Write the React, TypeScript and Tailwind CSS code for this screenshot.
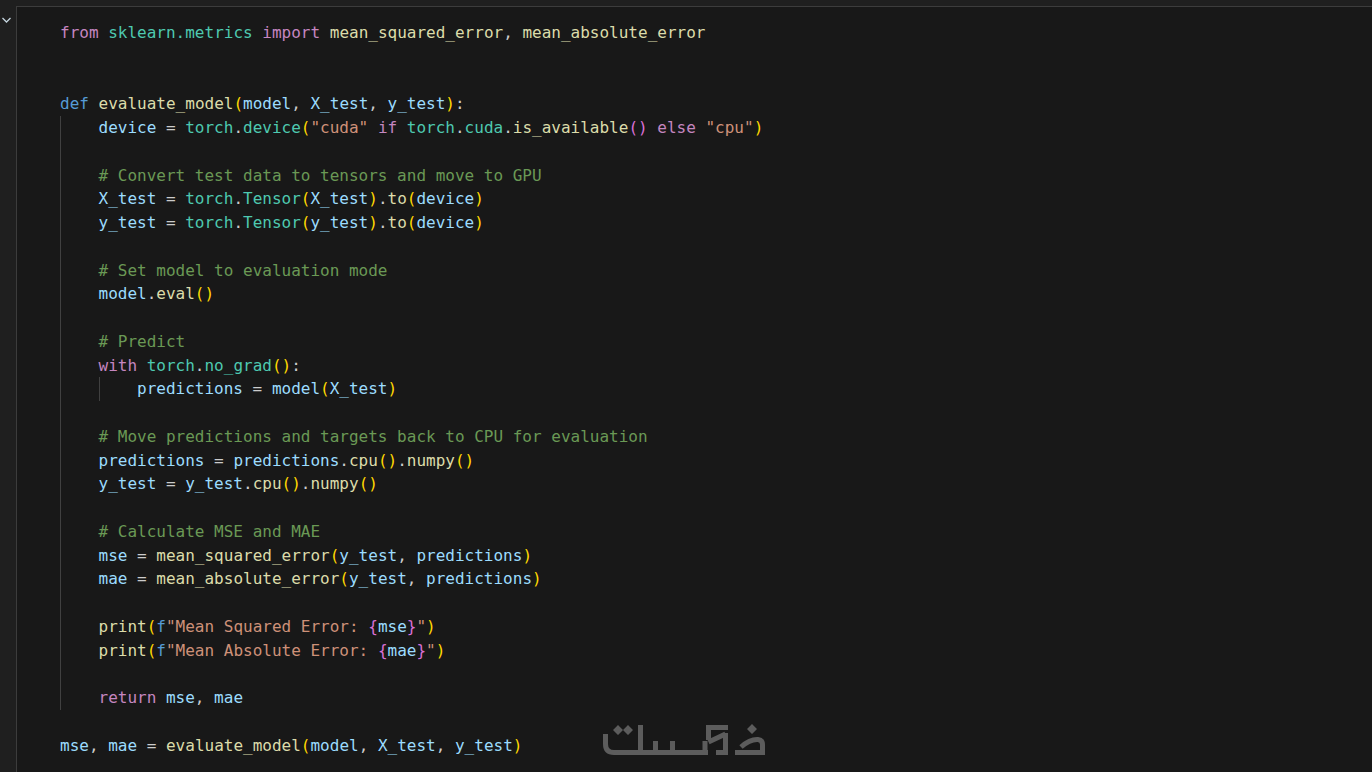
import React from 'react';

const kw = 'text-[#c586c0]';
const def = 'text-[#569cd6]';
const fn = 'text-[#dcdcaa]';
const vr = 'text-[#9cdcfe]';
const cls = 'text-[#4ec9b0]';
const str = 'text-[#ce9178]';
const com = 'text-[#6a9955]';
const gold = 'text-[#ffd700]';
const orchid = 'text-[#da70d6]';
const pl = 'text-[#cccccc]';

type Token = [string, string];

const Line = ({ tokens = [] }: { tokens?: Token[] }) => (
  <div className="h-[23.75px] leading-[23.75px] whitespace-pre">
    {tokens.map(([color, text], i) => (
      <span key={i} className={color}>{text}</span>
    ))}
  </div>
);

const assignTensor = (name: string): Token[] => [
  [vr, name], [pl, ' = '], [cls, 'torch'], [pl, '.'], [cls, 'Tensor'], [gold, '('], [vr, name], [gold, ')'],
  [pl, '.'], [fn, 'to'], [gold, '('], [vr, 'device'], [gold, ')'],
];

const printLine = (label: string, name: string): Token[] => [
  [fn, 'print'], [gold, '('], [def, 'f'], [str, `"${label}: `], [orchid, '{'], [vr, name], [orchid, '}'], [str, '"'], [gold, ')'],
];

const metricLine = (name: string, func: string): Token[] => [
  [vr, name], [pl, ' = '], [fn, func], [gold, '('], [vr, 'y_test'], [pl, ', '], [vr, 'predictions'], [gold, ')'],
];

function KhamsatLogo() {
  return (
    <svg viewBox="0 0 170 36" className="w-[170px] h-[36px]" fill="none" stroke="#5c5c5c" strokeWidth="5">
      <path d="M5.500 12v10q0 8.500 8.500 8.500H108" />
      <path d="M40.500 3v27M55.500 19v11M72.500 19v11M105 19v11" />
      <path d="M106 5.500h22M108.500 3v15M108.500 20l17-8" />
      <path d="M125.500 11v22M116 30.500h10" />
      <path d="M141 25q9-8 17-7.500q4.500.5 4.500 5v10M135 30.500h30" />
      <path d="M18 3l5 5-5 5-5-5zM28 3l5 5-5 5-5-5zM152 2l5 5-5 5-5-5z" fill="#5c5c5c" stroke="none" />
    </svg>
  );
}

export default function App() {
  return (
    <div className="relative h-[772px] w-[1372px] overflow-hidden bg-[#1f1f1f] font-['DejaVu_Sans_Mono',monospace] text-[16px]">
      <div className="mt-[6px] flex h-[766px]">
        <div className="w-4 shrink-0 pl-[2px] pt-[11px]">
          <svg viewBox="0 0 9 6" className="w-[9px] h-[6px]" fill="none" stroke="#c5d5df" strokeWidth="1.300">
            <path d="M.5 1l4 4 4-4" />
          </svg>
        </div>
        <div className="flex-1 border-l border-t border-[#3c3c3c] bg-[#181818] pl-[43px] pt-[14px]">
          <Line tokens={[[kw, 'from'], [pl, ' '], [cls, 'sklearn.metrics'], [pl, ' '], [kw, 'import'], [pl, ' '], [fn, 'mean_squared_error'], [pl, ', '], [fn, 'mean_absolute_error']]} />
          <Line />
          <Line />
          <Line tokens={[[def, 'def'], [pl, ' '], [fn, 'evaluate_model'], [gold, '('], [vr, 'model'], [pl, ', '], [vr, 'X_test'], [pl, ', '], [vr, 'y_test'], [gold, ')'], [pl, ':']]} />
          <div className="border-l border-[#404040] pl-[37.5px]">
            <Line tokens={[[vr, 'device'], [pl, ' = '], [cls, 'torch'], [pl, '.'], [cls, 'device'], [gold, '('], [str, '"cuda"'], [pl, ' '], [kw, 'if'], [pl, ' '], [cls, 'torch'], [pl, '.'], [cls, 'cuda'], [pl, '.'], [fn, 'is_available'], [orchid, '()'], [pl, ' '], [kw, 'else'], [pl, ' '], [str, '"cpu"'], [gold, ')']]} />
            <Line />
            <Line tokens={[[com, '# Convert test data to tensors and move to GPU']]} />
            <Line tokens={assignTensor('X_test')} />
            <Line tokens={assignTensor('y_test')} />
            <Line />
            <Line tokens={[[com, '# Set model to evaluation mode']]} />
            <Line tokens={[[vr, 'model'], [pl, '.'], [fn, 'eval'], [gold, '()']]} />
            <Line />
            <Line tokens={[[com, '# Predict']]} />
            <Line tokens={[[kw, 'with'], [pl, ' '], [cls, 'torch'], [pl, '.'], [cls, 'no_grad'], [gold, '()'], [pl, ':']]} />
            <div className="border-l border-[#404040] pl-[37.5px]">
              <Line tokens={[[vr, 'predictions'], [pl, ' = '], [vr, 'model'], [gold, '('], [vr, 'X_test'], [gold, ')']]} />
            </div>
            <Line />
            <Line tokens={[[com, '# Move predictions and targets back to CPU for evaluation']]} />
            <Line tokens={[[vr, 'predictions'], [pl, ' = '], [vr, 'predictions'], [pl, '.'], [fn, 'cpu'], [gold, '()'], [pl, '.'], [fn, 'numpy'], [gold, '()']]} />
            <Line tokens={[[vr, 'y_test'], [pl, ' = '], [vr, 'y_test'], [pl, '.'], [fn, 'cpu'], [gold, '()'], [pl, '.'], [fn, 'numpy'], [gold, '()']]} />
            <Line />
            <Line tokens={[[com, '# Calculate MSE and MAE']]} />
            <Line tokens={metricLine('mse', 'mean_squared_error')} />
            <Line tokens={metricLine('mae', 'mean_absolute_error')} />
            <Line />
            <Line tokens={printLine('Mean Squared Error', 'mse')} />
            <Line tokens={printLine('Mean Absolute Error', 'mae')} />
            <Line />
            <Line tokens={[[kw, 'return'], [pl, ' '], [vr, 'mse'], [pl, ', '], [vr, 'mae']]} />
          </div>
          <Line />
          <Line tokens={[[vr, 'mse'], [pl, ', '], [vr, 'mae'], [pl, ' = '], [fn, 'evaluate_model'], [gold, '('], [vr, 'model'], [pl, ', '], [vr, 'X_test'], [pl, ', '], [vr, 'y_test'], [gold, ')']]} />
        </div>
      </div>
      <div className="absolute left-[600px] top-[722px]">
        <KhamsatLogo />
      </div>
    </div>
  );
}
